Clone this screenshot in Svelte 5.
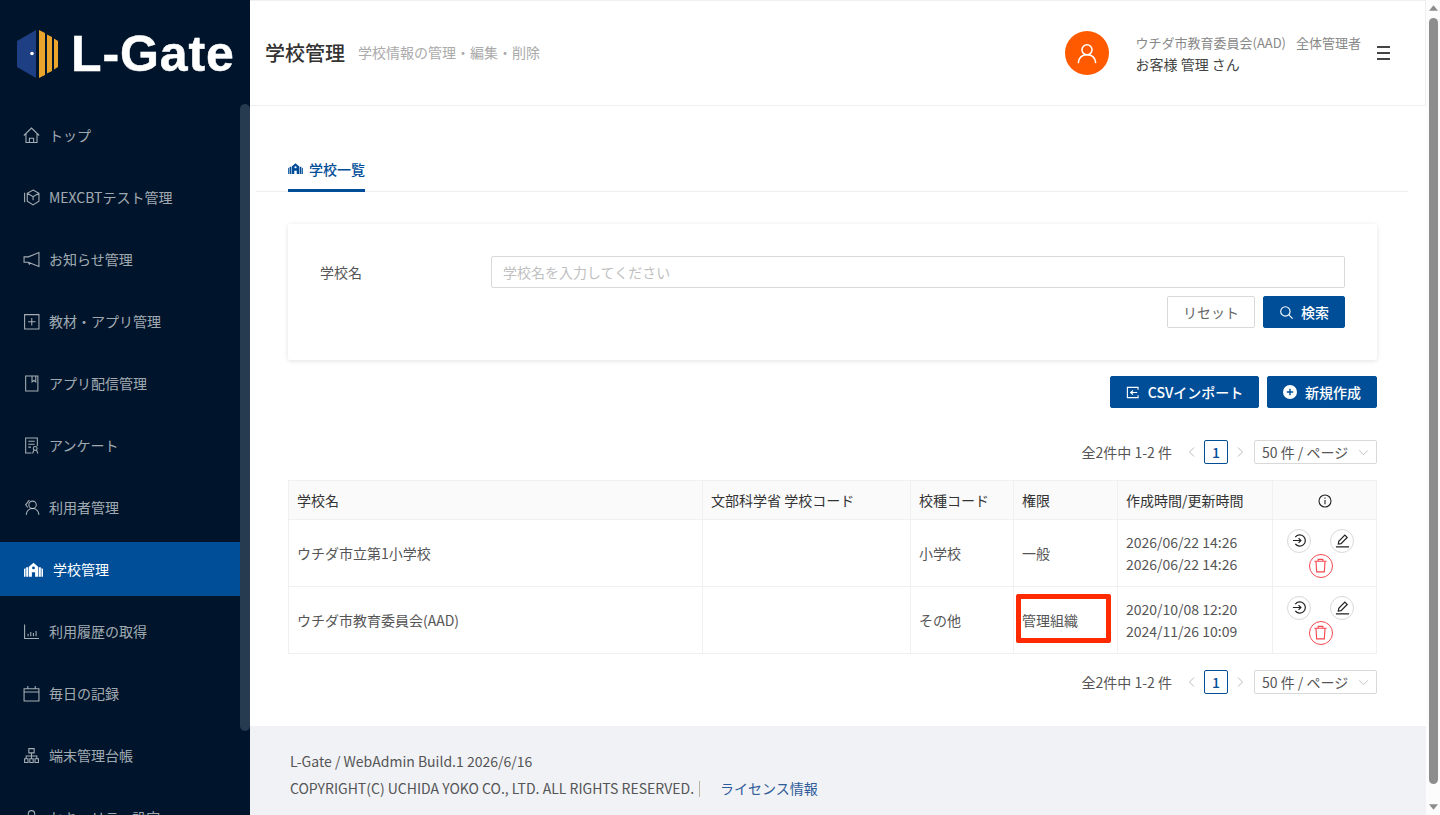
<script>
  const nav = [
    { label: 'トップ', icon: 'home' },
    { label: 'MEXCBTテスト管理', icon: 'box' },
    { label: 'お知らせ管理', icon: 'megaphone' },
    { label: '教材・アプリ管理', icon: 'plus' },
    { label: 'アプリ配信管理', icon: 'book' },
    { label: 'アンケート', icon: 'survey' },
    { label: '利用者管理', icon: 'user' },
    { label: '学校管理', icon: 'school', active: true },
    { label: '利用履歴の取得', icon: 'chart' },
    { label: '毎日の記録', icon: 'calendar' },
    { label: '端末管理台帳', icon: 'tree' },
    { label: 'セキュリティ設定', icon: 'lock' }
  ];
  const rows = [
    { name: 'ウチダ市立第1小学校', kind: '小学校', role: '一般', created: '2026/06/22 14:26', updated: '2026/06/22 14:26' },
    { name: 'ウチダ市教育委員会(AAD)', kind: 'その他', role: '管理組織', created: '2020/10/08 12:20', updated: '2024/11/26 10:09', marked: true }
  ];
</script>

{#snippet school(cls)}
  <svg class={cls} viewBox="0 0 20 15" fill="currentColor" fill-rule="evenodd"><path d="M4.900 15V4.800L10 .5l5.100 4.300V15h-3.400v-4.500H8.300V15zM8.500 5.800a1.500 1.500 0 1 0 3 0a1.500 1.500 0 1 0-3 0z"/><path d="M0 15V7l1.600-1.200V15zM2.300 15V5h1.900v10zM15.800 15V5h1.900v10zM18.400 15V5.800L20 7v8z"/></svg>
{/snippet}

{#snippet navIcon(name)}
  <svg class="nav-icon" viewBox="0 0 16 16" fill="none" stroke="currentColor" stroke-width="1">
    {#if name === 'home'}
      <path d="M.8 8 8 1 15.200 8M2.800 6.500v8h10.400v-8M6 14.500v-4h4v4"/>
    {:else if name === 'box'}
      <path d="M9.500 1 15 4v7.500L9.500 15 4 11.500V4zM4 4l5.500 3.200L15 4M9.500 7.200v3.300M1.500 3.500v9"/>
    {:else if name === 'megaphone'}
      <path d="M15 1.500v13L5 10.500H1v-5h4zM5 10.500l1.200 2.500"/>
    {:else if name === 'plus'}
      <path d="M1.500 1.500h13.500v13.500H1.500zM8.250 4.800v7M4.800 8.250h7"/>
    {:else if name === 'book'}
      <path d="M2.500 1h11.500v14H2.500zM8.500 1v5.500l1.800-1.300 1.700 1.300V1"/>
    {:else if name === 'survey'}
      <path d="M13.500 8.500V1H2.500v14h5.500M5 4h6M5 6.800h6M5 9.500h2.500"/><circle cx="11.500" cy="10.800" r="1.800"/><path d="M9 15.500l1.200-3M14 15.500l-1.200-3"/>
    {:else if name === 'user'}
      <circle cx="9" cy="5.500" r="3.500"/><path d="M3 15c.5-3.800 3-6 6-6s5.500 2.200 6 6M6 1 2.500 5.500 4.500 8"/>
    {:else if name === 'chart'}
      <path d="M1.500 1.500v13h13.500M4.800 12.500V10M7.300 12.500V8.500M9.800 12.500V9.500M12.300 12.500V7.500"/>
    {:else if name === 'calendar'}
      <path d="M1 3.500h14v11.500H1zM1 6.500h14M4.500 1v2.500M11.500 1v2.500"/>
    {:else if name === 'tree'}
      <path d="M5.500 1.500h5v4h-5zM1.500 11h3.200v3.500H1.500zM6.400 11h3.200v3.500H6.400zM11.300 11h3.200v3.500h-3.200zM8 5.500V11M3 11V8.500h10V11"/>
    {:else if name === 'lock'}
      <path d="M2.500 7h11v8h-11zM5 7V4.500a3 3 0 0 1 6 0V7"/>
    {/if}
  </svg>
{/snippet}

{#snippet pager()}
  <div class="pager">
    <span class="total">全2件中 1-2 件</span>
    <svg class="arrow" viewBox="0 0 8 12"><path d="M6.500 1.500 2 6l4.500 4.500"/></svg>
    <span class="page">1</span>
    <svg class="arrow" viewBox="0 0 8 12"><path d="M1.500 1.500 6 6l-4.500 4.500"/></svg>
    <span class="size">50 件 / ページ<svg viewBox="0 0 12 8"><path d="M1 1.500 6 6.500l5-5"/></svg></span>
  </div>
{/snippet}

<div class="app">
  <aside class="side">
    <div class="logo">
      <svg class="mark" viewBox="0 0 42 48">
        <path d="M0 11 19 0v48L0 37z" fill="#1f3f85"/>
        <circle cx="15" cy="23.500" r="1.800" fill="#fff"/>
        <path d="M22 0l6 3v42l-6 3zM30 4.500l5 2.500v34l-5 2.500zM37 8.500l4 2.500v26l-4 2.500z" fill="#eba52d"/>
      </svg>
      <span class="logo-text">L-Gate</span>
    </div>
    <nav>
      {#each nav as item}
        <div class="item" class:active={item.active}>
          {#if item.icon === 'school'}
            {@render school('nav-school')}
          {:else}
            {@render navIcon(item.icon)}
          {/if}
          <span>{item.label}</span>
        </div>
      {/each}
    </nav>
    <div class="side-thumb"></div>
  </aside>

  <div class="main">
    <header>
      <h1>学校管理</h1>
      <span class="sub">学校情報の管理・編集・削除</span>
      <div class="avatar">
        <svg viewBox="0 0 24 24" fill="none" stroke="#fff" stroke-width="1.700"><circle cx="12" cy="8.500" r="5.500"/><path d="M2.500 23c.5-5.500 4-9 9.500-9s9 3.500 9.500 9"/></svg>
      </div>
      <div class="who">
        <div class="org"><span>ウチダ市教育委員会(AAD)</span><span>全体管理者</span></div>
        <div class="person">お客様 管理 さん</div>
      </div>
      <div class="burger"><i></i><i></i><i></i></div>
    </header>

    <div class="content">
      <div class="tabs">
        <div class="tab">{@render school('tab-school')}<span>学校一覧</span></div>
      </div>

      <section class="card">
        <div class="field">
          <label for="school-name">学校名</label>
          <input id="school-name" placeholder="学校名を入力してください" />
        </div>
        <div class="search-actions">
          <button class="btn ghost">リセット</button>
          <button class="btn primary search">
            <svg viewBox="0 0 16 16" fill="none" stroke="currentColor" stroke-width="1.200"><circle cx="6.800" cy="6.800" r="5"/><path d="m10.500 10.500 4 4"/></svg>
            検索
          </button>
        </div>
      </section>

      <div class="actions">
        <button class="btn primary csv">
          <svg viewBox="0 0 14 14" fill="none" stroke="currentColor" stroke-width="1.200"><path d="M13 4V1.500H1.500v11H13V10M12 7H5M7.500 4.800 5 7l2.500 2.200"/></svg>
          CSVインポート
        </button>
        <button class="btn primary create">
          <svg viewBox="0 0 14 14"><circle cx="7" cy="7" r="7" fill="#fff"/><path d="M7 3.800v6.400M3.800 7h6.400" stroke="#004e98" stroke-width="1.400"/></svg>
          新規作成
        </button>
      </div>

      {@render pager()}

      <table>
        <colgroup>
          <col class="c1" /><col class="c2" /><col class="c3" /><col class="c4" /><col class="c5" /><col class="c6" />
        </colgroup>
        <thead>
          <tr>
            <th>学校名</th>
            <th>文部科学省 学校コード</th>
            <th>校種コード</th>
            <th>権限</th>
            <th>作成時間/更新時間</th>
            <th class="center">
              <svg class="info" viewBox="0 0 14 14" fill="none" stroke="#222" stroke-width="1.100"><circle cx="7" cy="7" r="6"/><path d="M7 6v4.200M7 3.500v1.200"/></svg>
            </th>
          </tr>
        </thead>
        <tbody>
          {#each rows as r}
            <tr>
              <td class="up1">{r.name}</td>
              <td></td>
              <td class="up1">{r.kind}</td>
              <td class="role up1">
                {r.role}
                {#if r.marked}<span class="mark-box"></span>{/if}
              </td>
              <td class="dates"><div>{r.created}</div><div>{r.updated}</div></td>
              <td class="ops">
                <div class="op-grid">
                  <button class="op" aria-label="ログイン">
                    <svg viewBox="0 0 16 16" fill="none" stroke="#222" stroke-width="1.300"><path d="M3.500 4.300A6 6 0 1 1 3.500 11.700M1 8h8.500M7 5.500 9.500 8 7 10.500"/></svg>
                  </button>
                  <button class="op" aria-label="編集">
                    <svg viewBox="0 0 16 16" fill="none" stroke="#222" stroke-width="1.300"><path d="M1 14.800h14M3.500 11.800l.5-3L10.500 2.200 13 4.700l-6.500 6.600z"/></svg>
                  </button>
                  <button class="op del" aria-label="削除">
                    <svg viewBox="0 0 16 16" fill="none" stroke="#f5484f" stroke-width="1.200"><path d="M1.500 3.500h13M5.500 3.500v-2h5v2M3.200 3.500l.7 11.300h8.200l.7-11.300"/></svg>
                  </button>
                </div>
              </td>
            </tr>
          {/each}
        </tbody>
      </table>

      {@render pager()}
    </div>

    <footer>
      <div>L-Gate / WebAdmin Build.1 2026/6/16</div>
      <div class="copy">COPYRIGHT(C) UCHIDA YOKO CO., LTD. ALL RIGHTS RESERVED.<i></i><a href="#license">ライセンス情報</a></div>
    </footer>
  </div>

  <div class="page-scroll">
    <svg class="up" viewBox="0 0 10 6"><path d="M5 0l5 6H0z"/></svg>
    <div class="thumb"></div>
    <svg class="down" viewBox="0 0 10 6"><path d="M5 6 0 0h10z"/></svg>
  </div>
</div>

<style>
  :global(body) {
    margin: 0;
    overflow: hidden;
    background: #fff;
  }
  * { box-sizing: border-box; }
  .app {
    display: flex;
    height: 815px;
    overflow: hidden;
    font-family: "Noto Sans CJK JP", "Noto Sans", sans-serif;
    font-size: 14px;
    color: #333;
  }
  button { font-family: inherit; cursor: pointer; }

  .side {
    position: relative;
    flex: 0 0 250px;
    background: #00152b;
    overflow: hidden;
  }
  .logo {
    display: flex;
    align-items: center;
    height: 108px;
    padding: 0 0 0 17px;
    gap: 12px;
  }
  .mark { width: 42px; height: 48px; }
  .logo-text {
    font-family: "Liberation Sans", sans-serif;
    font-weight: 700;
    font-size: 50px;
    letter-spacing: .9px;
    -webkit-text-stroke: .5px #fff;
    color: #fff;
    line-height: 1;
  }
  nav {
    display: flex;
    flex-direction: column;
    gap: 8px;
    width: 240px;
  }
  .item {
    display: flex;
    align-items: center;
    flex: 0 0 54px;
    padding-left: 23px;
    gap: 9px;
    color: rgba(255, 255, 255, .65);
  }
  .item.active {
    background: #004e98;
    color: #fff;
    padding-left: 24px;
    gap: 10px;
  }
  .nav-icon { width: 17px; height: 17px; flex: none; }
  :global(.nav-school) { width: 19px; height: 15px; flex: none; }
  .side-thumb {
    position: absolute;
    left: 240px;
    top: 104px;
    width: 10px;
    height: 627px;
    border-radius: 5px;
    background: #263a50;
  }

  .main {
    flex: 0 0 1175px;
    display: flex;
    flex-direction: column;
    height: 815px;
  }
  header {
    flex: 0 0 106px;
    display: flex;
    align-items: center;
    padding: 0 35px 0 15px;
    border: 1px solid #eeeff3;
    border-left: 0;
    background: #fff;
  }
  h1 {
    margin: 0 0 2px;
    font-size: 20px;
    font-weight: 500;
    color: #333;
  }
  .sub {
    margin: 0 0 2px 13px;
    color: #aaa;
    font-size: 14px;
  }
  .avatar {
    margin-left: auto;
    width: 44px;
    height: 44px;
    border-radius: 50%;
    background: #ff5a00;
    display: flex;
    align-items: center;
    justify-content: center;
  }
  .avatar svg { width: 22px; height: 22px; }
  .who { margin-left: 27px; padding-top: 2px; }
  .org {
    display: flex;
    gap: 10px;
    font-size: 13px;
    line-height: 20px;
    color: #888;
  }
  .person {
    font-size: 14px;
    line-height: 22px;
    color: #444;
  }
  .burger {
    margin-left: 16px;
    display: flex;
    flex-direction: column;
    gap: 4.500px;
    width: 13px;
  }
  .burger i { display: block; height: 1.500px; background: #444; }

  .content {
    flex: 1;
    padding: 44px 49px 0 6px;
    min-height: 0;
  }
  .tabs {
    border-bottom: 1px solid #eee;
    padding-left: 32px;
    margin-right: -31px;
    height: 42px;
  }
  .tab {
    display: inline-flex;
    align-items: center;
    gap: 6px;
    height: 42px;
    border-bottom: 3px solid #004e98;
    color: #004e98;
    font-weight: 500;
    font-size: 14px;
    padding-bottom: 2px;
  }
  :global(.tab-school) { width: 15px; height: 11px; }

  .card {
    margin: 32px 0 0 32px;
    height: 136px;
    padding: 32px 32px 0;
    background: #fff;
    box-shadow: 0 1px 5px rgba(0, 0, 0, .12);
    border-radius: 2px;
  }
  .field {
    display: flex;
    align-items: center;
  }
  .field label { flex: 0 0 171px; color: #555; }
  .field input {
    flex: 1;
    height: 32px;
    border: 1px solid #d9d9d9;
    border-radius: 2px;
    padding: 0 11px;
    font-family: inherit;
    font-size: 14px;
    outline: none;
  }
  .field input::placeholder { color: #bfbfbf; }
  .search-actions {
    display: flex;
    justify-content: flex-end;
    gap: 8px;
    margin-top: 8px;
  }
  .btn {
    display: inline-flex;
    align-items: center;
    justify-content: center;
    height: 32px;
    border-radius: 2px;
    font-size: 14px;
    padding: 0;
  }
  .ghost {
    width: 88px;
    background: #fff;
    border: 1px solid #d9d9d9;
    color: #666;
  }
  .primary {
    background: #004e98;
    border: 1px solid #004e98;
    color: #fff;
    font-weight: 500;
  }
  .search { width: 82px; gap: 7px; }
  .search svg { width: 15px; height: 15px; }
  .actions {
    display: flex;
    justify-content: flex-end;
    gap: 8px;
    margin-top: 16px;
  }
  .csv { width: 149px; gap: 9px; }
  .create { width: 110px; gap: 8px; }
  .csv svg { width: 13px; height: 13px; }
  .create svg { width: 14px; height: 14px; }

  .pager {
    display: flex;
    align-items: center;
    justify-content: flex-end;
    height: 24px;
    margin-top: 32px;
    color: #555;
  }
  table + .pager { margin-top: 16px; }
  .total { margin-right: 15px; }
  .arrow {
    width: 9px;
    height: 12px;
    fill: none;
    stroke: #bbb;
    stroke-width: 1;
  }
  .page {
    width: 24px;
    height: 24px;
    margin: 0 8px;
    border: 1px solid #004e98;
    border-radius: 2px;
    color: #004e98;
    font-weight: 500;
    display: flex;
    align-items: center;
    justify-content: center;
  }
  .size {
    margin-left: 9px;
    width: 123px;
    height: 24px;
    padding: 0 7px;
    border: 1px solid #d9d9d9;
    border-radius: 2px;
    display: flex;
    align-items: center;
    justify-content: space-between;
    color: #555;
  }
  .size svg {
    width: 11px;
    height: 7px;
    fill: none;
    stroke: #bbb;
  }

  table {
    width: 1088px;
    margin: 16px 0 0 32px;
    border-collapse: collapse;
    table-layout: fixed;
  }
  .c1 { width: 414px; }
  .c2 { width: 208px; }
  .c3 { width: 103px; }
  .c4 { width: 104px; }
  .c5 { width: 155px; }
  .c6 { width: 104px; }
  th, td {
    border: 1px solid #f0f0f0;
    padding: 0 8px;
    text-align: left;
    font-weight: 400;
    color: #555;
    font-size: 14px;
  }
  thead tr { height: 39px; }
  th { background: #fafafa; color: #333; }
  tbody tr { height: 67px; }
  td.up1 { padding-bottom: 1px; }
  td.role { position: relative; }
  th.center { text-align: center; padding-top: 1px; }
  .info { width: 14px; height: 14px; display: block; margin: 0 auto; }
  .mark-box {
    position: absolute;
    left: 2px;
    top: 7px;
    width: 95px;
    height: 49px;
    border: 5px solid #ff2a00;
    border-radius: 2px;
  }
  .dates { line-height: 22px; }
  td.ops { padding: 0 0 0 14px; }
  .op-grid {
    display: grid;
    grid-template-columns: 24px 24px;
    column-gap: 19px;
    row-gap: 1px;
    width: 67px;
    justify-items: center;
  }
  .op {
    width: 24px;
    height: 24px;
    border-radius: 50%;
    border: 1px solid #d9d9d9;
    background: #fff;
    padding: 0;
    display: flex;
    align-items: center;
    justify-content: center;
  }
  .op svg { width: 15px; height: 15px; }
  .op.del {
    grid-column: 1 / 3;
    border-color: #f5484f;
  }

  footer {
    flex: 0 0 89px;
    background: #f0f2f5;
    padding: 22px 0 0 40px;
    line-height: 27px;
    color: #555;
    font-size: 14px;
  }
  .copy { display: flex; align-items: center; }
  .copy i {
    display: block;
    width: 1px;
    height: 16px;
    margin: 0 20px 0 5px;
    background: #bdb3a2;
  }
  .copy a { color: #2f5b9a; text-decoration: none; }

  .page-scroll {
    flex: 0 0 15px;
    background: #fcfcfc;
    position: relative;
  }
  .thumb {
    position: absolute;
    left: 3px;
    top: 18px;
    width: 9px;
    height: 766px;
    border-radius: 5px;
    background: #8d8d8d;
  }
  .up, .down {
    position: absolute;
    left: 3px;
    width: 9px;
    height: 6px;
    fill: #8d8d8d;
  }
  .up { top: 5px; }
  .down { bottom: 5px; }
</style>
